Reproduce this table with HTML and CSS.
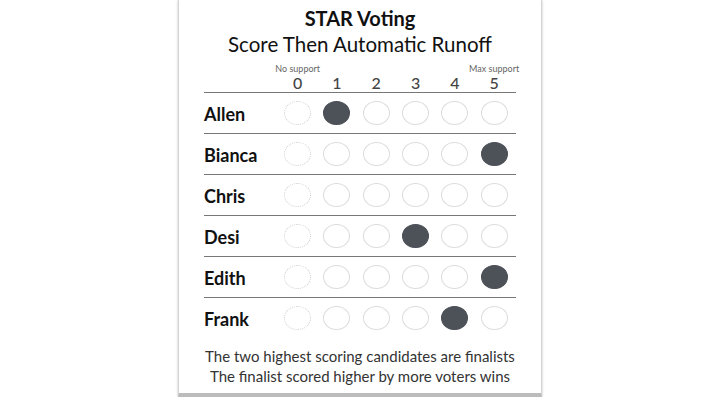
FILE: index.html
```html
<!DOCTYPE html>
<html lang="en">
<head>
  <meta charset="UTF-8" />
  <meta name="viewport" content="width=device-width, initial-scale=1" />
  <title>STAR Voting</title>
  <link rel="stylesheet" href="styles.css">
</head>
<body>
  <div class="card">
    <h1>STAR Voting</h1>
    <h2>Score Then Automatic Runoff</h2>

    <div class="ballot">
      <div class="row head">
        <div class="name"></div>
        <div class="col"><span class="hint">No support</span><span class="num">0</span></div>
        <div class="col"><span class="hint"></span><span class="num">1</span></div>
        <div class="col"><span class="hint"></span><span class="num">2</span></div>
        <div class="col"><span class="hint"></span><span class="num">3</span></div>
        <div class="col"><span class="hint"></span><span class="num">4</span></div>
        <div class="col"><span class="hint">Max support</span><span class="num">5</span></div>
      </div>

      <div class="row">
        <div class="name">Allen</div>
        <div class="col"><span class="dot zero"></span></div>
        <div class="col"><span class="dot on"></span></div>
        <div class="col"><span class="dot"></span></div>
        <div class="col"><span class="dot"></span></div>
        <div class="col"><span class="dot"></span></div>
        <div class="col"><span class="dot"></span></div>
      </div>
      <div class="row">
        <div class="name">Bianca</div>
        <div class="col"><span class="dot zero"></span></div>
        <div class="col"><span class="dot"></span></div>
        <div class="col"><span class="dot"></span></div>
        <div class="col"><span class="dot"></span></div>
        <div class="col"><span class="dot"></span></div>
        <div class="col"><span class="dot on"></span></div>
      </div>
      <div class="row">
        <div class="name">Chris</div>
        <div class="col"><span class="dot zero"></span></div>
        <div class="col"><span class="dot"></span></div>
        <div class="col"><span class="dot"></span></div>
        <div class="col"><span class="dot"></span></div>
        <div class="col"><span class="dot"></span></div>
        <div class="col"><span class="dot"></span></div>
      </div>
      <div class="row">
        <div class="name">Desi</div>
        <div class="col"><span class="dot zero"></span></div>
        <div class="col"><span class="dot"></span></div>
        <div class="col"><span class="dot"></span></div>
        <div class="col"><span class="dot on"></span></div>
        <div class="col"><span class="dot"></span></div>
        <div class="col"><span class="dot"></span></div>
      </div>
      <div class="row">
        <div class="name">Edith</div>
        <div class="col"><span class="dot zero"></span></div>
        <div class="col"><span class="dot"></span></div>
        <div class="col"><span class="dot"></span></div>
        <div class="col"><span class="dot"></span></div>
        <div class="col"><span class="dot"></span></div>
        <div class="col"><span class="dot on"></span></div>
      </div>
      <div class="row last">
        <div class="name">Frank</div>
        <div class="col"><span class="dot zero"></span></div>
        <div class="col"><span class="dot"></span></div>
        <div class="col"><span class="dot"></span></div>
        <div class="col"><span class="dot"></span></div>
        <div class="col"><span class="dot on"></span></div>
        <div class="col"><span class="dot"></span></div>
      </div>
    </div>

    <p class="note">The two highest scoring candidates are finalists<br>The finalist scored higher by more voters wins</p>
  </div>
</body>
</html>
```

FILE: styles.css
```css
body { margin: 0; background: #fff; font-family: Lato, "Open Sans", sans-serif; color: #111; }
.card { width: 312px; height: 393px; margin: 0 auto; padding: 0 25px; box-sizing: content-box; background: #fff; border-left: 1px solid #d4d4d4; border-right: 1px solid #d4d4d4; border-bottom: 4px solid #bcbcbc; box-shadow: 1px 0 2px rgba(0,0,0,0.08), -1px 0 2px rgba(0,0,0,0.08), 0 2px 2px rgba(0,0,0,0.1); }
h1 { margin: 0; padding-top: 6px; font-size: 20px; line-height: 25px; font-weight: 700; text-align: center; }
h2 { margin: 0; font-size: 20.5px; line-height: 26px; font-weight: 400; text-align: center; }
.ballot { margin-top: 7px; }
.row { display: grid; grid-template-columns: 74px repeat(6, 39.3px); align-items: center; height: 40px; border-bottom: 1px solid #777; }
.row.last { border-bottom: none; }
.row.head { height: 28px; align-items: end; }
.name { font-size: 18px; font-weight: 700; padding-top: 1px; }
.col { display: flex; flex-direction: column; align-items: center; justify-content: center; }
.hint { font-size: 9px; line-height: 10px; height: 10px; color: #666; white-space: nowrap; }
.num { font-size: 16px; line-height: 18px; color: #444; font-weight: 500; }
.dot { width: 25px; height: 22px; border: 1px solid #dcdcdc; border-radius: 50%; }
.dot.zero { border: 1px dotted #cfcfcf; }
.dot.on { background: #4d5158; border-color: #4d5158; }
.note { margin: 8px 0 0; font-size: 15px; line-height: 20px; color: #333; text-align: center; }
```
